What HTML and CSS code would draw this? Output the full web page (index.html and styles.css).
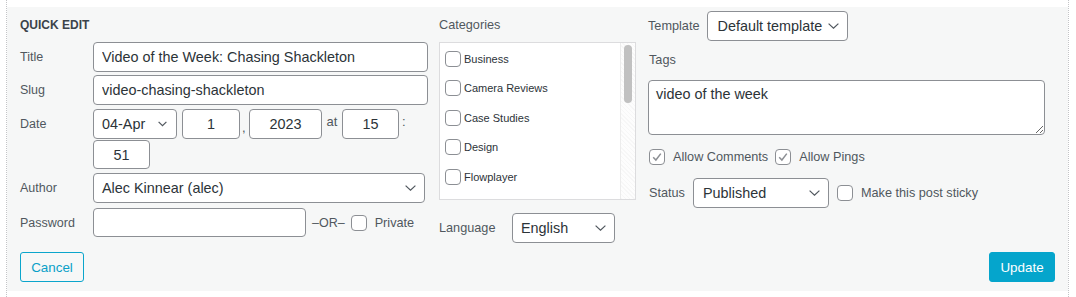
FILE: index.html
```html
<!DOCTYPE html>
<html lang="en">
<head>
<meta charset="utf-8">
<title>Quick Edit</title>
<link rel="stylesheet" href="styles.css">
</head>
<body>
<div class="wrap">
  <div class="panel">
    <div class="cols">
      <div class="col col-left">
        <div class="heading">QUICK EDIT</div>
        <div class="row row-title">
          <span class="lbl">Title</span>
          <input class="inp grow" type="text" value="Video of the Week: Chasing Shackleton">
        </div>
        <div class="row row-slug">
          <span class="lbl">Slug</span>
          <input class="inp grow" type="text" value="video-chasing-shackleton">
        </div>
        <div class="row row-date">
          <span class="lbl lbl-top">Date</span>
          <div class="date">
            <div class="select sel-month"><span>04-Apr</span><svg class="chev" width="9" height="6" viewBox="0 0 9 6"><path d="M0.6 0.8 L4.5 4.7 L8.4 0.8" fill="none" stroke="#50575e" stroke-width="1.2"/></svg></div>
            <input class="inp small d-day" type="text" value="1">
            <span class="sep sep-comma">,</span>
            <input class="inp small d-year" type="text" value="2023">
            <span class="sep sep-at">at</span>
            <input class="inp small d-hour" type="text" value="15">
            <span class="sep sep-colon">:</span>
            <input class="inp small d-min" type="text" value="51">
          </div>
        </div>
        <div class="row row-author">
          <span class="lbl">Author</span>
          <div class="select grow sel-author"><span>Alec Kinnear (alec)</span><svg class="chev" width="11" height="6" viewBox="0 0 11 6"><path d="M0.6 0.6 L5.5 5.2 L10.4 0.6" fill="none" stroke="#50575e" stroke-width="1.2"/></svg></div>
        </div>
        <div class="row row-pass">
          <span class="lbl">Password</span>
          <input class="inp pass" type="text" value="">
          <span class="or">–OR–</span>
          <span class="cb"></span>
          <span class="cb-lbl">Private</span>
        </div>
      </div>

      <div class="col col-mid">
        <div class="mid-title">Categories</div>
        <div class="catbox">
          <ul class="cats">
            <li><span class="cb"></span><span>Business</span></li>
            <li><span class="cb"></span><span>Camera Reviews</span></li>
            <li><span class="cb"></span><span>Case Studies</span></li>
            <li><span class="cb"></span><span>Design</span></li>
            <li><span class="cb"></span><span>Flowplayer</span></li>
          </ul>
          <div class="track"><div class="thumb"></div></div>
        </div>
        <div class="row row-lang">
          <span class="lang-lbl">Language</span>
          <div class="select sel-lang"><span>English</span><svg class="chev" width="11" height="6" viewBox="0 0 11 6"><path d="M0.6 0.6 L5.5 5.2 L10.4 0.6" fill="none" stroke="#50575e" stroke-width="1.2"/></svg></div>
        </div>
      </div>

      <div class="col col-right">
        <div class="row row-template">
          <span class="r-lbl">Template</span>
          <div class="select sel-template"><span>Default template</span><svg class="chev" width="11" height="6" viewBox="0 0 11 6"><path d="M0.6 0.6 L5.5 5.2 L10.4 0.6" fill="none" stroke="#50575e" stroke-width="1.2"/></svg></div>
        </div>
        <div class="tags-lbl">Tags</div>
        <textarea class="tags">video of the week</textarea>
        <div class="row row-allow">
          <span class="cb checked"><svg width="14" height="14" viewBox="0 0 14 14"><path d="M3.2 7.2 L5.9 10 L10.8 3.6" fill="none" stroke="#8c8f94" stroke-width="1.5"/></svg></span>
          <span class="cb-lbl">Allow Comments</span>
          <span class="cb checked cb-ping"><svg width="14" height="14" viewBox="0 0 14 14"><path d="M3.2 7.2 L5.9 10 L10.8 3.6" fill="none" stroke="#8c8f94" stroke-width="1.5"/></svg></span>
          <span class="cb-lbl">Allow Pings</span>
        </div>
        <div class="row row-status">
          <span class="r-lbl status-lbl">Status</span>
          <div class="select sel-status"><span>Published</span><svg class="chev" width="11" height="6" viewBox="0 0 11 6"><path d="M0.6 0.6 L5.5 5.2 L10.4 0.6" fill="none" stroke="#50575e" stroke-width="1.2"/></svg></div>
          <span class="cb cb-sticky"></span>
          <span class="cb-lbl">Make this post sticky</span>
        </div>
      </div>
    </div>
    <div class="actions">
      <button class="btn btn-cancel" type="button">Cancel</button>
      <button class="btn btn-update" type="button">Update</button>
    </div>
  </div>
</div>
</body>
</html>
```
FILE: styles.css
```css
* { box-sizing: border-box; }
html, body { margin: 0; padding: 0; background: #fff; }
body {
  font-family: "Liberation Sans", Arial, sans-serif;
  color: #50575e;
  font-size: 13px;
}
.wrap {
  margin-left: 6px;
  width: 1063px;
  height: 297px;
  border-left: 1px dotted #c3c4c7;
  border-right: 1px dotted #c3c4c7;
  padding-top: 7px;
}
.panel {
  background: #f6f7f7;
  height: 284px;
  padding: 4px 13px 0 13px;
  display: flex;
  flex-direction: column;
}
.cols { display: flex; align-items: flex-start; }
.col { display: flex; flex-direction: column; }
.col-left { width: 408px; }
.col-mid { width: 197px; margin-left: 11px; }
.col-right { width: 396px; margin-left: 12px; }

.heading {
  margin-top: 5px;
  height: 18px;
  line-height: 18px;
  font-weight: bold;
  font-size: 12px;
  color: #3c434a;
  margin-bottom: 8px;
}
.row { display: flex; align-items: center; }
.lbl { width: 73px; flex: none; font-size: 12.5px; color: #50575e; }
.lbl-top { align-self: flex-start; line-height: 30px; }
.grow { flex: 1; min-width: 0; }

.inp {
  height: 30px;
  border: 1px solid #8c8f94;
  border-radius: 4px;
  background: #fff;
  font-family: inherit;
  font-size: 14.4px;
  color: #2c3338;
  padding: 0 8px;
  outline: none;
}
.row-title { margin-bottom: 3px; }
.row-slug { margin-bottom: 4px; }

.date {
  display: flex;
  flex-wrap: wrap;
  align-items: center;
  row-gap: 1px;
  width: 335px;
}
.select {
  height: 30px;
  border: 1px solid #8c8f94;
  border-radius: 4px;
  background: #fff;
  color: #2c3338;
  font-size: 14.4px;
  display: flex;
  align-items: center;
  justify-content: space-between;
  padding: 0 8px;
}
.chev { flex: none; }
.sel-month { width: 84px; margin-right: 5px; padding-right: 9px; }
.small { text-align: center; padding: 0 2px; }
.d-day { width: 58px; }
.d-year { width: 73px; }
.d-hour { width: 57px; }
.d-min { width: 57px; height: 29px; }
.sep { font-size: 13px; color: #50575e; }
.sep-comma { width: 9px; padding-left: 2px; align-self: flex-end; line-height: 22px; }
.sep-at { width: 20px; text-align: center; margin-top: -5px; }
.sep-colon { width: 10px; padding-left: 3px; margin-top: -5px; }

.row-date { margin-bottom: 4px; align-items: flex-start; }
.row-author { margin-bottom: 5px; }
.row-author .select { height: 30px; margin-right: 3px; }
.pass { width: 213px; height: 29px; }
.or { margin-left: 6px; font-size: 12.5px; }
.row-pass .cb { margin-left: 6px; }
.cb-lbl { margin-left: 8px; font-size: 12.7px; color: #50575e; white-space: nowrap; }

.cb {
  width: 16px;
  height: 16px;
  flex: none;
  border: 1px solid #8c8f94;
  border-radius: 4px;
  background: #fff;
  display: inline-flex;
  align-items: center;
  justify-content: center;
}

.mid-title {
  margin-top: 5px;
  height: 18px;
  line-height: 18px;
  font-size: 12.7px;
  margin-bottom: 8px;
}
.catbox {
  height: 158px;
  border: 1px solid #dcdcde;
  background: #fff;
  display: flex;
}
.cats {
  list-style: none;
  margin: 0;
  padding: 1px 0 0 5px;
  flex: 1;
}
.cats li {
  height: 29.5px;
  display: flex;
  align-items: center;
  font-size: 11px;
  color: #2c3338;
}
.cats li .cb { margin-right: 3px; }
.track {
  width: 15px;
  border-left: 1px solid #ececec;
  background: repeating-linear-gradient(45deg, #f7f7f7 0 1px, #fdfdfd 1px 3px);
  padding: 1px 3px 0 3px;
}
.thumb {
  height: 58px;
  border-radius: 4px;
  background: #c1c1c1;
  margin-top: 1px;
}
.row-lang { margin-top: 13px; }
.lang-lbl { width: 73px; font-size: 12.7px; }
.sel-lang { width: 103px; height: 30px; }

.row-template { height: 30px; }
.r-lbl { font-size: 12.7px; }
.sel-template { width: 141px; margin-left: 8px; padding: 0 8px 0 9px; }
.sel-template .chev { margin-left: 4px; }
.tags-lbl { margin-top: 11px; font-size: 12.7px; height: 16px; line-height: 16px; margin-left: 1px; }
.tags {
  margin-top: 12px;
  width: 397px;
  height: 55px;
  border: 1px solid #8c8f94;
  border-radius: 4px;
  background: #fff;
  font-family: inherit;
  font-size: 14.4px;
  color: #2c3338;
  padding: 5px 7px;
  resize: vertical;
  outline: none;
  display: block;
}
.row-allow { margin-top: 14px; padding-left: 1px; }
.cb-ping { margin-left: 7px; }
.row-allow .cb-lbl { margin-left: 8px; }
.row-status { margin-top: 13px; }
.status-lbl { margin-left: 1px; }
.sel-status { width: 136px; margin-left: 8px; height: 30px; padding-left: 9px; }
.cb-sticky { margin-left: 8px; }

.actions {
  display: flex;
  justify-content: space-between;
  margin-top: auto;
  margin-bottom: 9px;
}
.btn {
  height: 30px;
  border-radius: 3px;
  font-family: inherit;
  font-size: 13.4px;
  padding: 0 8px;
  cursor: pointer;
}
.btn-cancel {
  width: 64px;
  border: 1px solid #0aa5cc;
  background: #f6f7f7;
  color: #0aa0c8;
}
.btn-update {
  width: 66px;
  border: 1px solid #05a5cc;
  background: #05a5cc;
  color: #fff;
}
```
